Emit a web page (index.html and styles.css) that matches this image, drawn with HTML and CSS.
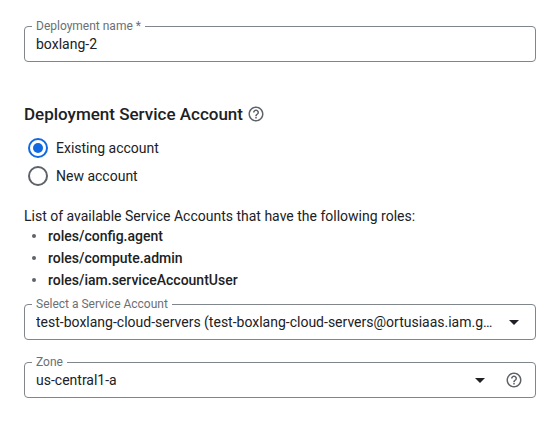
FILE: index.html
```html
<!DOCTYPE html>
<html lang="en">
<head>
    <meta charset="UTF-8">
    <meta name="viewport" content="width=device-width, initial-scale=1.0">
    <title>Deployment</title>
    <link rel="stylesheet" href="styles.css">
</head>
<body>
    <form class="deploy-form">
        <div class="field">
            <label class="field-label" for="deployment-name">Deployment name *</label>
            <input class="field-control" id="deployment-name" type="text" value="boxlang-2" required>
        </div>

        <!-- Service account -->
        <div class="section-header">
            <h2 class="section-title" id="account-title">Deployment Service Account</h2>
            <button class="help-button" type="button" aria-label="Help for service account">
                <svg class="help-icon" viewBox="0 0 24 24"><path d="M11 18h2v-2h-2v2zm1-16C6.48 2 2 6.48 2 12s4.48 10 10 10 10-4.48 10-10S17.52 2 12 2zm0 18c-4.41 0-8-3.59-8-8s3.59-8 8-8 8 3.59 8 8-3.59 8-8 8zm0-14c-2.21 0-4 1.79-4 4h2c0-1.1.9-2 2-2s2 .9 2 2c0 2-3 1.75-3 5h2c0-2.25 3-2.5 3-5 0-2.21-1.79-4-4-4z"/></svg>
            </button>
        </div>
        <div class="radio-group" role="radiogroup" aria-labelledby="account-title">
            <label class="radio-row">
                <input class="radio" type="radio" name="account" value="existing" checked>
                Existing account
            </label>
            <label class="radio-row">
                <input class="radio" type="radio" name="account" value="new">
                New account
            </label>
        </div>

        <p class="roles-intro">List of available Service Accounts that have the following roles:</p>
        <ul class="roles">
            <li class="role">roles/config.agent</li>
            <li class="role">roles/compute.admin</li>
            <li class="role">roles/iam.serviceAccountUser</li>
        </ul>

        <div class="field">
            <label class="field-label" for="service-account">Select a Service Account</label>
            <select class="field-control" id="service-account">
                <option>test-boxlang-cloud-servers (test-boxlang-cloud-servers@ortusiaas.iam.gserviceaccount.com)</option>
            </select>
            <svg class="caret" viewBox="0 0 10 5"><path d="M0 0h10L5 5z"/></svg>
        </div>

        <!-- Zone -->
        <div class="field">
            <label class="field-label" for="zone">Zone</label>
            <select class="field-control" id="zone">
                <option>us-central1-a</option>
            </select>
            <svg class="caret" viewBox="0 0 10 5"><path d="M0 0h10L5 5z"/></svg>
            <button class="help-button" type="button" aria-label="Help for zone">
                <svg class="help-icon" viewBox="0 0 24 24"><path d="M11 18h2v-2h-2v2zm1-16C6.48 2 2 6.48 2 12s4.48 10 10 10 10-4.48 10-10S17.52 2 12 2zm0 18c-4.41 0-8-3.59-8-8s3.59-8 8-8 8 3.59 8 8-3.59 8-8 8zm0-14c-2.21 0-4 1.79-4 4h2c0-1.1.9-2 2-2s2 .9 2 2c0 2-3 1.75-3 5h2c0-2.25 3-2.5 3-5 0-2.21-1.79-4-4-4z"/></svg>
            </button>
        </div>
    </form>
</body>
</html>
```
FILE: styles.css
```css
* {
    box-sizing: border-box;
}

body {
    margin: 0;
    background-color: #fff;
    color: #202124;
    font-family: Roboto, sans-serif;
    font-size: 14px;
    line-height: 20px;
}

.deploy-form {
    padding: 26px 21px 26px 24px;
}

/* Outlined fields */
.field {
    position: relative;
    display: flex;
    align-items: center;
    height: 36px;
    padding: 0 12px 0 11px;
    border: 1px solid #80868b;
    border-radius: 4px;
}

.field + .field {
    margin-top: 22px;
}

/* label sits over the top border and cuts it */
.field-label {
    position: absolute;
    top: -9px;
    left: 7px;
    padding: 0 4px;
    background-color: #fff;
    color: #6b6f74;
    font-size: 12px;
    line-height: 16px;
}

.field-control {
    flex: 1;
    min-width: 0;
    height: 34px;
    margin: 0;
    padding: 0;
    border: none;
    outline: none;
    background: none;
    appearance: none;
    color: #202124;
    font: inherit;
    overflow: hidden;
    text-overflow: ellipsis;
    white-space: nowrap;
}

.caret {
    flex: none;
    width: 10px;
    height: 5px;
    margin: 0 20px 0 12px;
    fill: #202124;
    pointer-events: none;
}

.caret:last-child {
    margin-right: 4px;
}

.help-button {
    display: flex;
    padding: 0;
    border: none;
    background: none;
    cursor: pointer;
}

.help-icon {
    width: 18px;
    height: 18px;
    fill: #5f6368;
}

/* Section */
.section-header {
    display: flex;
    align-items: center;
    gap: 4px;
    margin-top: 40px;
}

.section-title {
    margin: 0;
    font-size: 17px;
    font-weight: 500;
    line-height: 24px;
}

.radio-group {
    display: flex;
    flex-direction: column;
    margin-top: 8px;
}

.radio-row {
    display: flex;
    align-items: center;
    gap: 8px;
    height: 28px;
    padding-left: 4px;
}

.radio {
    display: grid;
    place-content: center;
    width: 20px;
    height: 20px;
    margin: 0;
    border: 2px solid #5f6368;
    border-radius: 50%;
    appearance: none;
}

.radio:checked {
    border-color: #1069e0;
}

.radio:checked::before {
    content: "";
    width: 10px;
    height: 10px;
    border-radius: 50%;
    background-color: #1069e0;
}

/* Roles */
.roles-intro {
    margin: 16px 0 0;
}

.roles {
    margin: -1px 0 13px;
    padding: 0;
    list-style: none;
}

.role {
    display: flex;
    align-items: center;
    gap: 12px;
    padding-left: 8px;
    font-weight: 500;
    line-height: 22px;
}

.role::before {
    content: "";
    width: 4px;
    height: 4px;
    border-radius: 50%;
    background-color: #5f6368;
}
```
